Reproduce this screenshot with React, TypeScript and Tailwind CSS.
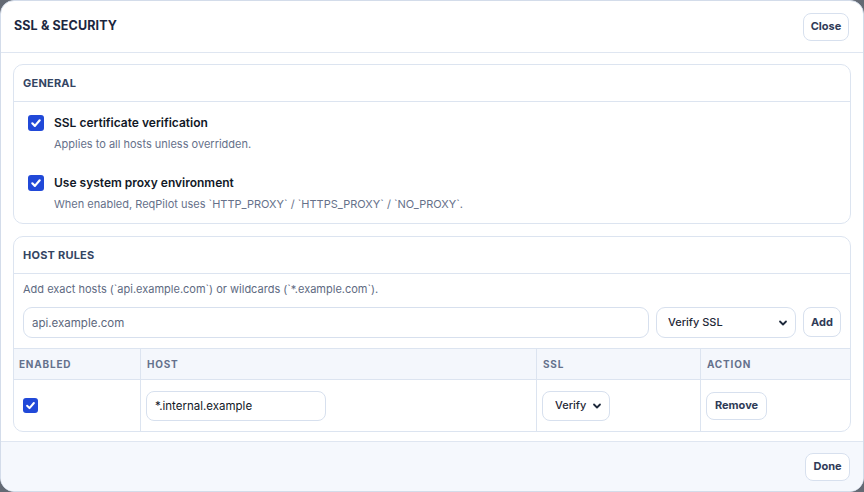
import React from 'react'

const font = { fontFamily: 'Inter, "Noto Sans", sans-serif' }

function Check({ size = 16 }: { size?: number }) {
  return (
    <span
      className="flex shrink-0 items-center justify-center rounded-[3px] bg-[#2149d8]"
      style={{ width: size, height: size }}
    >
      <svg width={size - 4} height={size - 4} viewBox="0 0 12 12" fill="none">
        <path d="M2.3 6.3 4.9 8.9 9.7 3.3" stroke="white" strokeWidth="2.2" strokeLinecap="round" strokeLinejoin="round" />
      </svg>
    </span>
  )
}

function Chevron() {
  return (
    <svg className="pointer-events-none absolute right-[8px] top-1/2 -translate-y-1/2" width="10" height="10" viewBox="0 0 10 10" fill="none">
      <path d="M2 3.5 5 6.5 8 3.5" stroke="#1e293b" strokeWidth="1.8" strokeLinecap="round" strokeLinejoin="round" />
    </svg>
  )
}

function Btn({ children, className = '' }: { children: React.ReactNode; className?: string }) {
  return (
    <button
      className={`rounded-[8px] border border-[#d7e0ee] bg-white text-[11px] font-bold text-[#2f3b57] ${className}`}
    >
      {children}
    </button>
  )
}

export default function App() {
  return (
    <div className="h-screen w-screen bg-[#646a74]" style={font}>
      <div className="flex h-[492px] w-full flex-col overflow-hidden rounded-[14px] border border-[#d3dcea] bg-white">
        {/* header */}
        <div className="flex h-[52px] shrink-0 items-center justify-between border-b border-[#dfe6f1] pl-[13px] pr-[14px]">
          <h1 className="text-[12.5px] font-bold tracking-[0.01em] text-[#1c2740]">SSL &amp; SECURITY</h1>
          <Btn className="h-[28px] w-[46px]">Close</Btn>
        </div>

        {/* body */}
        <div className="flex flex-1 flex-col gap-[12px] px-[12px] pt-[11px]">
          {/* general */}
          <section className="rounded-[10px] border border-[#dce4f0]">
            <div className="flex h-[37px] items-center border-b border-[#dce4f0] px-[9px]">
              <h2 className="text-[11px] font-bold tracking-[0.02em] text-[#344563]">GENERAL</h2>
            </div>
            <div className="flex flex-col gap-[23px] px-[14px] pb-[11px] pt-[13px]">
              <label className="flex gap-[10px]">
                <Check />
                <div>
                  <div className="text-[12px] font-semibold leading-[16px] text-[#111827]">SSL certificate verification</div>
                  <div className="mt-[5px] text-[11px] leading-[16px] text-[#66718a]">Applies to all hosts unless overridden.</div>
                </div>
              </label>
              <label className="flex gap-[10px]">
                <Check />
                <div>
                  <div className="text-[12px] font-semibold leading-[16px] text-[#111827]">Use system proxy environment</div>
                  <div className="mt-[5px] text-[11px] leading-[16px] text-[#66718a]">
                    When enabled, ReqPilot uses `HTTP_PROXY` / `HTTPS_PROXY` / `NO_PROXY`.
                  </div>
                </div>
              </label>
            </div>
          </section>

          {/* host rules */}
          <section className="overflow-hidden rounded-[10px] border border-[#dce4f0]">
            <div className="flex h-[37px] items-center border-b border-[#dce4f0] px-[9px]">
              <h2 className="text-[11px] font-bold tracking-[0.02em] text-[#344563]">HOST RULES</h2>
            </div>
            <p className="px-[9px] pt-[7px] text-[11px] leading-[16px] text-[#5e6a82]">
              Add exact hosts (`api.example.com`) or wildcards (`*.example.com`).
            </p>
            <div className="flex gap-[7px] px-[9px] pb-[10px] pt-[10px]">
              <input
                className="h-[31px] flex-1 rounded-[9px] border border-[#d7e0ee] px-[8px] text-[11.5px] text-[#1f2937] outline-none placeholder:text-[#5d687d]"
                placeholder="api.example.com"
              />
              <div className="relative w-[140px]">
                <select className="h-[31px] w-full appearance-none rounded-[9px] border border-[#d7e0ee] bg-white pl-[11px] text-[11px] font-medium text-[#1f2937] outline-none">
                  <option>Verify SSL</option>
                  <option>Skip SSL</option>
                </select>
                <Chevron />
              </div>
              <Btn className="h-[30px] w-[38px]">Add</Btn>
            </div>

            <div className="grid grid-cols-[127px_396px_164px_1fr] border-t border-[#dce4f0] text-[10px] font-bold tracking-[0.08em] text-[#64718c]">
              <div className="flex h-[31px] items-center border-b border-r border-[#dce4f0] bg-[#f4f7fc] pl-[5px]">ENABLED</div>
              <div className="flex h-[31px] items-center border-b border-r border-[#dce4f0] bg-[#f4f7fc] pl-[6px]">HOST</div>
              <div className="flex h-[31px] items-center border-b border-r border-[#dce4f0] bg-[#f4f7fc] pl-[6px]">SSL</div>
              <div className="flex h-[31px] items-center border-b border-[#dce4f0] bg-[#f4f7fc] pl-[6px]">ACTION</div>

              <div className="flex h-[51px] items-center border-r border-[#dce4f0] pl-[9px]">
                <Check size={15} />
              </div>
              <div className="flex h-[51px] items-center border-r border-[#dce4f0] pl-[5px]">
                <input
                  className="h-[30px] w-[180px] rounded-[8px] border border-[#d7e0ee] px-[8px] text-[11.5px] font-normal tracking-normal text-[#111827] outline-none"
                  defaultValue="*.internal.example"
                />
              </div>
              <div className="flex h-[51px] items-center border-r border-[#dce4f0] pl-[5px]">
                <div className="relative w-[68px]">
                  <select className="h-[30px] w-full appearance-none rounded-[8px] border border-[#d7e0ee] bg-white pl-[12px] text-[11px] font-medium tracking-normal text-[#1f2937] outline-none">
                    <option>Verify</option>
                    <option>Skip</option>
                  </select>
                  <Chevron />
                </div>
              </div>
              <div className="flex h-[51px] items-center pl-[5px]">
                <Btn className="h-[28px] w-[61px] tracking-normal">Remove</Btn>
              </div>
            </div>
          </section>
        </div>

        {/* footer */}
        <div className="flex h-[50px] shrink-0 items-center justify-end border-t border-[#dfe6f1] bg-[#f5f8fd] pr-[13px]">
          <Btn className="h-[28px] w-[45px]">Done</Btn>
        </div>
      </div>
    </div>
  )
}
